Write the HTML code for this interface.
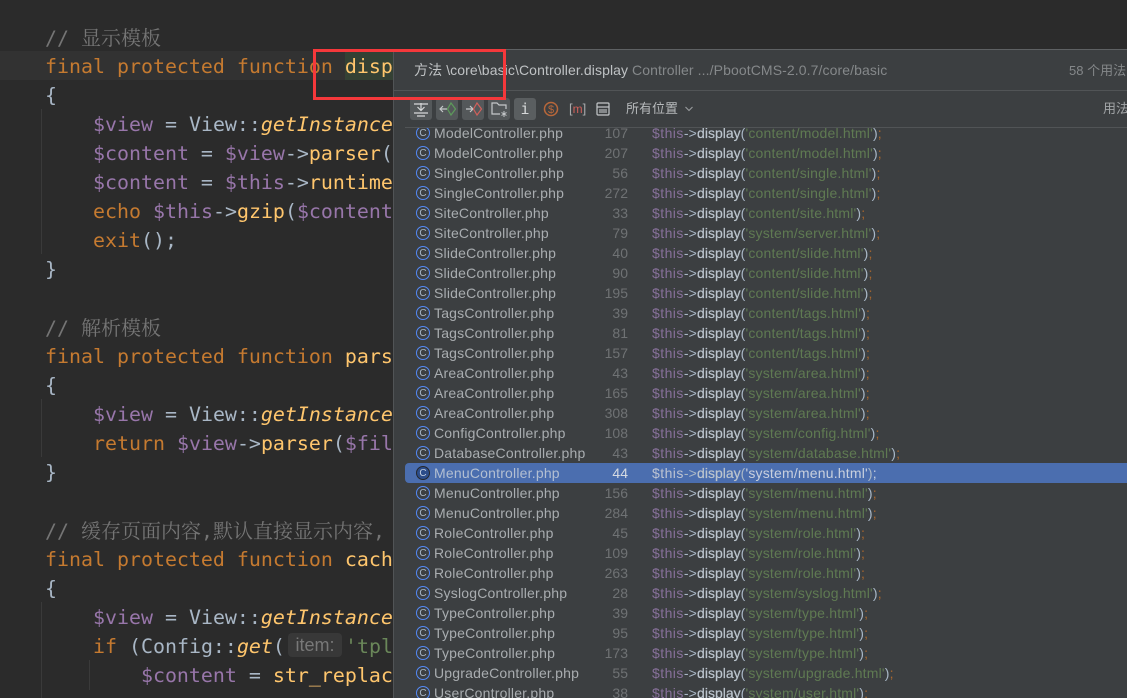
<!DOCTYPE html>
<html lang="zh"><head><meta charset="utf-8"><title>Usages</title>
<style>
html,body{margin:0;padding:0;background:#2b2b2b}
#a{position:relative;width:1127px;height:698px;overflow:hidden;background:#2b2b2b}
.l{position:absolute;left:45px;height:29px;line-height:31px;white-space:pre;font-family:"DejaVu Sans Mono","Liberation Mono",monospace;font-size:19.93px;color:#a9b7c6}
.k{color:#c57a30}.v{color:#9876aa}.f{color:#ffc66d}.i{color:#ffc66d;font-style:italic}.s{color:#6a8759}
.c{color:#757575}.c b{font:400 20px "Noto Serif CJK SC",serif}
.g{position:absolute;width:1px;background:#3a3a3a}
#p{position:absolute;left:393px;top:49px;width:734px;height:649px;background:#3c3f41;border-left:1px solid #515456;border-top:1px solid #5e6163;box-sizing:border-box;overflow:hidden;font-family:"Liberation Sans",Arial,sans-serif}
.t{position:absolute;white-space:pre;font-size:14px;line-height:18px}
.z{font-family:"Liberation Sans","Noto Sans CJK SC",sans-serif}
.h{position:absolute;background:#515456;height:1px}
.b{position:absolute;top:48px;width:22px;height:22px;background:#54585a;border-radius:3px}
.b svg,.q{position:absolute;left:0;top:0}
.r{position:relative;height:20px;line-height:21px;font-size:14px;white-space:pre;color:#a9adb0}
.r>*{position:absolute;top:0}
.o{left:22px;top:3px!important;width:12px;height:12px;border:1.3px solid #548af7;border-radius:50%;color:#a9b7c6;font:400 10px/13px "Liberation Sans",sans-serif;text-align:center}
.n{left:40px;letter-spacing:.2px}
.u{right:499px;text-align:right;color:#6f7274}
.d{left:258px;letter-spacing:.19px;color:#a9b7c6}
.d i{font-style:normal;color:#87709a;letter-spacing:.45px}.d b{font-weight:400;color:#bcc5ce;-webkit-text-stroke:.2px #bcc5ce;letter-spacing:0}.d u{text-decoration:none;color:#5f7a52}.d s{text-decoration:none;color:#a9672e}
.x{background:#4b6eaf;margin-left:11px;border-radius:4px 0 0 4px;color:#b6bec9}
.x .o{left:11px;border-color:#26272a;background:#2c4d8a;color:#c0cde0}.x .n{left:29px;color:#b3bfd2}.x .u{right:499px;color:#d5dae2}.x .d{left:247px}.x .d i{color:#bcc3d2}.x .d u{color:#c8d0de}.x .d s{color:#c8d0de}
</style></head><body><div id="a">
<div style="position:absolute;left:0;top:51px;width:393px;height:29px;background:#323232"></div>
<div style="position:absolute;left:345px;top:51px;width:48px;height:29px;background:#344134"></div>
<div class="g" style="left:41px;top:109px;height:145px"></div>
<div class="g" style="left:41px;top:399px;height:58px"></div>
<div class="g" style="left:41px;top:602px;height:96px"></div>
<div class="g" style="left:89px;top:660px;height:30px"></div>

<div class="l c" style="top:22px">// <b>显示模板</b></div>
<div class="l" style="top:51px"><span class="k">final protected function </span><span class="f">display</span>($tplFile)</div>
<div class="l" style="top:80px">{</div>
<div class="l" style="top:109px">    <span class="v">$view</span> = View::<span class="i">getInstance</span>();</div>
<div class="l" style="top:138px">    <span class="v">$content</span> = <span class="v">$view</span>-&gt;<span class="f">parser</span>($tplFile);</div>
<div class="l" style="top:167px">    <span class="v">$content</span> = <span class="v">$this</span>-&gt;<span class="f">runtime</span>($content);</div>
<div class="l" style="top:196px">    <span class="k">echo</span> <span class="v">$this</span>-&gt;<span class="f">gzip</span>(<span class="v">$content</span>);</div>
<div class="l" style="top:225px">    <span class="k">exit</span>();</div>
<div class="l" style="top:254px">}</div>
<div class="l c" style="top:312px">// <b>解析模板</b></div>
<div class="l" style="top:341px"><span class="k">final protected function </span><span class="f">parser</span>($file)</div>
<div class="l" style="top:370px">{</div>
<div class="l" style="top:399px">    <span class="v">$view</span> = View::<span class="i">getInstance</span>();</div>
<div class="l" style="top:428px">    <span class="k">return</span> <span class="v">$view</span>-&gt;<span class="f">parser</span>(<span class="v">$file</span>);</div>
<div class="l" style="top:457px">}</div>
<div class="l c" style="top:515px">// <b>缓存页面内容</b>,<b>默认直接显示内容</b>,</div>
<div class="l" style="top:544px"><span class="k">final protected function </span><span class="f">cache</span>($file)</div>
<div class="l" style="top:573px">{</div>
<div class="l" style="top:602px">    <span class="v">$view</span> = View::<span class="i">getInstance</span>();</div>
<div class="l" style="top:631px">    <span class="k">if</span> (Config::<span class="i">get</span>(</div>
<div style="position:absolute;left:288px;top:633px;width:54px;height:24px;border-radius:4px;background:#383838;color:#787878;font:18px/24px 'Liberation Sans',sans-serif;text-align:center">item:</div>
<div class="l s" style="top:631px;left:345px">'tpl</div>
<div class="l" style="top:660px">        <span class="v">$content</span> = <span class="f">str_replace</span>(</div>
<div class="l" style="top:692px">    } <span class="k">else</span> {</div>

<div id="p">
<div class="t z" style="left:20px;top:11px;color:#bfc2c4;letter-spacing:.1px">方法 \core\basic\Controller.display</div>
<div class="t z" style="left:238px;top:11px;color:#85888a;letter-spacing:.1px">Controller .../PbootCMS-2.0.7/core/basic</div>
<div class="t z" style="left:675px;top:12px;color:#85888a;font-size:13px">58 个用法</div>
<div class="h" style="left:0;top:40px;width:733px"></div>
<div class="b" style="left:16px"><svg width="22" height="22" fill="none" stroke="#d6d8d9" stroke-width="1.2"><path d="M4 6H18M11 5V12M7.5 9L11 12.5L14.5 9M4 15H18M7 18H15"/></svg></div>
<div class="b" style="left:42px"><svg width="22" height="22" fill="none" stroke-width="1.2"><path d="M11 11H4M7 8L4 11L7 14" stroke="#c5c8ca"/><path d="M15 5L19.5 11L15 17L11.5 11Z" stroke="#5d9b5a"/></svg></div>
<div class="b" style="left:68px"><svg width="22" height="22" fill="none" stroke-width="1.2"><path d="M4 11H11M8 8L11 11L8 14" stroke="#c5c8ca"/><path d="M15 5L19.5 11L15 17L11.5 11Z" stroke="#d0605a"/></svg></div>
<div class="b" style="left:94px"><svg width="22" height="22" fill="none" stroke="#c5c8ca" stroke-width="1.2"><path d="M12 16H4V5H9L11 7H18V11"/><path d="M16 13V19M13.5 14.5L18.5 17.5M18.5 14.5L13.5 17.5" stroke-width="1"/></svg></div>
<div class="b" style="left:120px;background:#5a5e60;color:#d6d8d9;font:15px/22px 'DejaVu Sans Mono',monospace;text-align:center">i</div>
<svg style="position:absolute;left:149px;top:50px" width="18" height="18" fill="none"><circle cx="8" cy="9" r="6.5" stroke="#b8673a" stroke-width="1.5"/><text x="8" y="13" font-family="Liberation Sans,sans-serif" font-size="11" text-anchor="middle" fill="#b8673a">$</text></svg>
<div class="t" style="left:175px;top:50px;font:13px/18px 'Liberation Sans',sans-serif;color:#a9abad">[<span style="color:#d0605a;font-size:12px">m</span>]</div>
<svg style="position:absolute;left:202px;top:52px" width="14" height="14" fill="none"><rect x="1" y="1" width="12" height="12" rx="1" stroke="#c5c8ca" stroke-width="1.2"/><path d="M1 5H13" stroke="#c5c8ca" stroke-width="1.2"/><rect x="3" y="7" width="8" height="4" fill="#85888a"/></svg>
<div class="t z" style="left:232px;top:50px;color:#b7babc;font-size:13px">所有位置</div>
<svg style="position:absolute;left:291px;top:56px" width="8" height="6" fill="none"><path d="M.5 1L4 4.5L7.5 1" stroke="#9a9d9f" stroke-width="1.1"/></svg>
<div class="t z" style="left:709px;top:50px;color:#a3a6a8;font-size:13px">用法</div>
<div class="h" style="left:11px;top:77px;width:722px"></div>
<div style="position:absolute;left:0;top:78px;width:733px;height:571px;overflow:hidden">
<div style="position:absolute;left:0;width:733px;top:-5px">
<div class="r"><span class="o">C</span><span class="n">ModelController.php</span><span class="u">107</span><span class="d"><i>$this</i>-&gt;<b>display</b>(<u>'content/model.html'</u>)<s>;</s></span></div>
<div class="r"><span class="o">C</span><span class="n">ModelController.php</span><span class="u">207</span><span class="d"><i>$this</i>-&gt;<b>display</b>(<u>'content/model.html'</u>)<s>;</s></span></div>
<div class="r"><span class="o">C</span><span class="n">SingleController.php</span><span class="u">56</span><span class="d"><i>$this</i>-&gt;<b>display</b>(<u>'content/single.html'</u>)<s>;</s></span></div>
<div class="r"><span class="o">C</span><span class="n">SingleController.php</span><span class="u">272</span><span class="d"><i>$this</i>-&gt;<b>display</b>(<u>'content/single.html'</u>)<s>;</s></span></div>
<div class="r"><span class="o">C</span><span class="n">SiteController.php</span><span class="u">33</span><span class="d"><i>$this</i>-&gt;<b>display</b>(<u>'content/site.html'</u>)<s>;</s></span></div>
<div class="r"><span class="o">C</span><span class="n">SiteController.php</span><span class="u">79</span><span class="d"><i>$this</i>-&gt;<b>display</b>(<u>'system/server.html'</u>)<s>;</s></span></div>
<div class="r"><span class="o">C</span><span class="n">SlideController.php</span><span class="u">40</span><span class="d"><i>$this</i>-&gt;<b>display</b>(<u>'content/slide.html'</u>)<s>;</s></span></div>
<div class="r"><span class="o">C</span><span class="n">SlideController.php</span><span class="u">90</span><span class="d"><i>$this</i>-&gt;<b>display</b>(<u>'content/slide.html'</u>)<s>;</s></span></div>
<div class="r"><span class="o">C</span><span class="n">SlideController.php</span><span class="u">195</span><span class="d"><i>$this</i>-&gt;<b>display</b>(<u>'content/slide.html'</u>)<s>;</s></span></div>
<div class="r"><span class="o">C</span><span class="n">TagsController.php</span><span class="u">39</span><span class="d"><i>$this</i>-&gt;<b>display</b>(<u>'content/tags.html'</u>)<s>;</s></span></div>
<div class="r"><span class="o">C</span><span class="n">TagsController.php</span><span class="u">81</span><span class="d"><i>$this</i>-&gt;<b>display</b>(<u>'content/tags.html'</u>)<s>;</s></span></div>
<div class="r"><span class="o">C</span><span class="n">TagsController.php</span><span class="u">157</span><span class="d"><i>$this</i>-&gt;<b>display</b>(<u>'content/tags.html'</u>)<s>;</s></span></div>
<div class="r"><span class="o">C</span><span class="n">AreaController.php</span><span class="u">43</span><span class="d"><i>$this</i>-&gt;<b>display</b>(<u>'system/area.html'</u>)<s>;</s></span></div>
<div class="r"><span class="o">C</span><span class="n">AreaController.php</span><span class="u">165</span><span class="d"><i>$this</i>-&gt;<b>display</b>(<u>'system/area.html'</u>)<s>;</s></span></div>
<div class="r"><span class="o">C</span><span class="n">AreaController.php</span><span class="u">308</span><span class="d"><i>$this</i>-&gt;<b>display</b>(<u>'system/area.html'</u>)<s>;</s></span></div>
<div class="r"><span class="o">C</span><span class="n">ConfigController.php</span><span class="u">108</span><span class="d"><i>$this</i>-&gt;<b>display</b>(<u>'system/config.html'</u>)<s>;</s></span></div>
<div class="r"><span class="o">C</span><span class="n">DatabaseController.php</span><span class="u">43</span><span class="d"><i>$this</i>-&gt;<b>display</b>(<u>'system/database.html'</u>)<s>;</s></span></div>
<div class="r x"><span class="o">C</span><span class="n">MenuController.php</span><span class="u">44</span><span class="d"><i>$this</i>-&gt;<b>display</b>(<u>'system/menu.html'</u>)<s>;</s></span></div>
<div class="r"><span class="o">C</span><span class="n">MenuController.php</span><span class="u">156</span><span class="d"><i>$this</i>-&gt;<b>display</b>(<u>'system/menu.html'</u>)<s>;</s></span></div>
<div class="r"><span class="o">C</span><span class="n">MenuController.php</span><span class="u">284</span><span class="d"><i>$this</i>-&gt;<b>display</b>(<u>'system/menu.html'</u>)<s>;</s></span></div>
<div class="r"><span class="o">C</span><span class="n">RoleController.php</span><span class="u">45</span><span class="d"><i>$this</i>-&gt;<b>display</b>(<u>'system/role.html'</u>)<s>;</s></span></div>
<div class="r"><span class="o">C</span><span class="n">RoleController.php</span><span class="u">109</span><span class="d"><i>$this</i>-&gt;<b>display</b>(<u>'system/role.html'</u>)<s>;</s></span></div>
<div class="r"><span class="o">C</span><span class="n">RoleController.php</span><span class="u">263</span><span class="d"><i>$this</i>-&gt;<b>display</b>(<u>'system/role.html'</u>)<s>;</s></span></div>
<div class="r"><span class="o">C</span><span class="n">SyslogController.php</span><span class="u">28</span><span class="d"><i>$this</i>-&gt;<b>display</b>(<u>'system/syslog.html'</u>)<s>;</s></span></div>
<div class="r"><span class="o">C</span><span class="n">TypeController.php</span><span class="u">39</span><span class="d"><i>$this</i>-&gt;<b>display</b>(<u>'system/type.html'</u>)<s>;</s></span></div>
<div class="r"><span class="o">C</span><span class="n">TypeController.php</span><span class="u">95</span><span class="d"><i>$this</i>-&gt;<b>display</b>(<u>'system/type.html'</u>)<s>;</s></span></div>
<div class="r"><span class="o">C</span><span class="n">TypeController.php</span><span class="u">173</span><span class="d"><i>$this</i>-&gt;<b>display</b>(<u>'system/type.html'</u>)<s>;</s></span></div>
<div class="r"><span class="o">C</span><span class="n">UpgradeController.php</span><span class="u">55</span><span class="d"><i>$this</i>-&gt;<b>display</b>(<u>'system/upgrade.html'</u>)<s>;</s></span></div>
<div class="r"><span class="o">C</span><span class="n">UserController.php</span><span class="u">38</span><span class="d"><i>$this</i>-&gt;<b>display</b>(<u>'system/user.html'</u>)<s>;</s></span></div>
</div></div>
</div>
<div style="position:absolute;left:313px;top:49px;width:193px;height:51px;border:3px solid #f5383b;box-sizing:border-box"></div>
</div></body></html>
